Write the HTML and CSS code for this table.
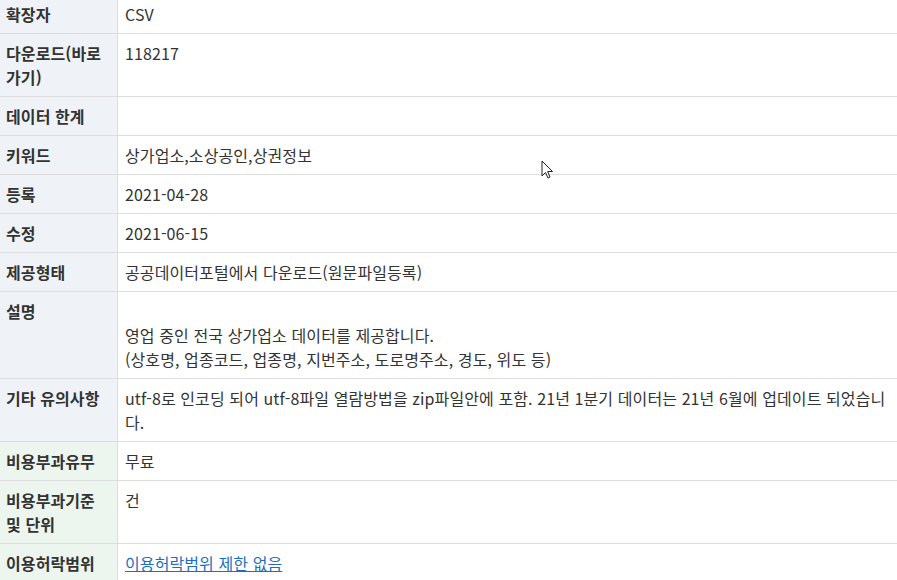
FILE: index.html
```html
<!DOCTYPE html>
<html lang="ko">
<head>
<meta charset="utf-8">
<link rel="stylesheet" href="styles.css">
</head>
<body>
<table class="meta">
  <tbody>
    <tr><th>확장자</th><td>CSV</td></tr>
    <tr><th>다운로드(바로가기)</th><td>118217</td></tr>
    <tr><th>데이터 한계</th><td></td></tr>
    <tr><th>키워드</th><td>상가업소,소상공인,상권정보</td></tr>
    <tr><th>등록</th><td>2021-04-28</td></tr>
    <tr><th>수정</th><td>2021-06-15</td></tr>
    <tr><th>제공형태</th><td>공공데이터포털에서 다운로드(원문파일등록)</td></tr>
    <tr><th>설명</th><td><br>영업 중인 전국 상가업소 데이터를 제공합니다.<br>(상호명, 업종코드, 업종명, 지번주소, 도로명주소, 경도, 위도 등)</td></tr>
    <tr><th>기타 유의사항</th><td>utf-8로 인코딩 되어 utf-8파일 열람방법을 zip파일안에 포함. 21년 1분기 데이터는 21년 6월에 업데이트 되었습니다.</td></tr>
    <tr class="fee"><th>비용부과유무</th><td>무료</td></tr>
    <tr class="fee"><th>비용부과기준 및 단위</th><td>건</td></tr>
    <tr class="fee"><th>이용허락범위</th><td><a href="#" class="lic">이용허락범위 제한 없음</a></td></tr>
  </tbody>
</table>
<svg class="cursor" width="14" height="20" viewBox="0 0 14 20"><path d="M1 1 L1 16 L4.5 12.5 L7 18 L9 17 L6.6 11.6 L11.5 11.5 Z" fill="#fff" stroke="#222" stroke-width="1" stroke-linejoin="round"/></svg>
</body>
</html>
```
FILE: styles.css
```css
html, body { margin: 0; padding: 0; background: #fff; }
body {
  font-family: "Noto Sans CJK KR", sans-serif;
  font-size: 16px;
  letter-spacing: 0.1px;
  color: #333;
  overflow: hidden;
  position: relative;
  height: 580px;
}
.meta {
  border-collapse: collapse;
  width: 897px;
  margin-top: -6px;
  table-layout: fixed;
}
.meta th, .meta td {
  border-top: 1px solid #dedede;
  border-bottom: 1px solid #dedede;
  line-height: 24px;
  padding: 7px;
  vertical-align: top;
  text-align: left;
}
.meta th {
  width: 104px;
  padding-left: 6px;
  background: #eff3f7;
  font-weight: 700;
  color: #333;
  border-right: 1px solid #dedede;
}
.meta tr.fee th { background: #edf6ee; }
.meta td { color: #333; font-weight: 400; }
.lic { color: #1a6fc2; text-decoration: underline; }
.cursor { position: absolute; left: 541px; top: 160px; }
```
